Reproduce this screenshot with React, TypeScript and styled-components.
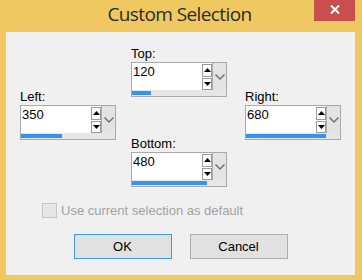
import React from 'react';
import styled, { createGlobalStyle } from 'styled-components';

const GlobalStyle = createGlobalStyle`
  html, body {
    margin: 0;
    padding: 0;
    background: #ffffff;
  }
  * {
    box-sizing: border-box;
  }
`;

type Field = { label: string; value: number; max: number };

const fields: Record<string, Field> = {
  top: { label: 'Top:', value: 120, max: 600 },
  left: { label: 'Left:', value: 350, max: 800 },
  right: { label: 'Right:', value: 680, max: 800 },
  bottom: { label: 'Bottom:', value: 480, max: 600 },
};

function SpinField({ field }: { field: Field }) {
  const pct = Math.min(100, (field.value / field.max) * 100);

  return (
    <FieldGroup>
      <FieldLabel>{field.label}</FieldLabel>
      <SpinBox>
        <SpinRow>
          <ValueInput readOnly value={String(field.value)} />
          <Spinner>
            <SpinButton>
              <svg width="7" height="4" viewBox="0 0 7 4">
                <polygon points="3.5,0 7,4 0,4" fill="#000" />
              </svg>
            </SpinButton>
            <SpinButton>
              <svg width="7" height="4" viewBox="0 0 7 4">
                <polygon points="0,0 7,0 3.5,4" fill="#000" />
              </svg>
            </SpinButton>
          </Spinner>
          <DropButton>
            <svg width="10" height="6" viewBox="0 0 10 6">
              <polyline points="0.5,0.5 5,5 9.5,0.5" fill="none" stroke="#6e6e6e" strokeWidth="1.4" />
            </svg>
          </DropButton>
        </SpinRow>
        <Track>
          <TrackFill style={{ width: `${pct}%` }} />
        </Track>
      </SpinBox>
    </FieldGroup>
  );
}

export default function App() {
  return (
    <>
      <GlobalStyle />
      <Window>
        <TitleBar>
          <span />
          <Title>Custom Selection</Title>
          <CloseButton>
            <svg width="10" height="9" viewBox="0 0 10 9">
              <path d="M1 0.5 L9 8.5 M9 0.5 L1 8.5" stroke="#fff" strokeWidth="2" />
            </svg>
          </CloseButton>
        </TitleBar>

        <Client>
          <FieldsArea>
            <SideColumn>
              <SpinField field={fields.left} />
            </SideColumn>
            <CenterColumn>
              <SpinField field={fields.top} />
              <SpinField field={fields.bottom} />
            </CenterColumn>
            <SideColumn $gap={18}>
              <SpinField field={fields.right} />
            </SideColumn>
          </FieldsArea>

          <CheckRow>
            <CheckBox />
            <CheckLabel>Use current selection as default</CheckLabel>
          </CheckRow>

          <ButtonRow>
            <DialogButton $isDefault>OK</DialogButton>
            <DialogButton>Cancel</DialogButton>
          </ButtonRow>
        </Client>
      </Window>
    </>
  );
}

const Window = styled.div`
  width: 362px;
  height: 280px;
  background: #f0c862;
  display: flex;
  flex-direction: column;
  font-family: 'Liberation Sans', Arial, sans-serif;
  font-size: 13px;
  color: #000;
`;

const TitleBar = styled.div`
  height: 32px;
  flex: none;
  display: grid;
  grid-template-columns: 1fr auto 1fr;
  padding: 0 7px 0 4px;
`;

const Title = styled.div`
  font-family: 'Open Sans', 'Noto Sans', sans-serif;
  font-size: 19px;
  letter-spacing: -0.6px;
  line-height: 28px;
  color: #2b2b2b;
  white-space: nowrap;
`;

const CloseButton = styled.div`
  justify-self: end;
  width: 41px;
  height: 21px;
  background: #c7504f;
  display: flex;
  align-items: center;
  justify-content: center;
  padding-bottom: 3px;
`;

const Client = styled.div`
  flex: 1;
  margin: 0 7px 5px 6px;
  background: #f0f0f0;
  padding-top: 14px;
`;

const FieldsArea = styled.div`
  display: flex;
  align-items: flex-start;
  padding-left: 14px;
`;

const SideColumn = styled.div<{ $gap?: number }>`
  margin-top: 43px;
  margin-left: ${(p) => p.$gap ?? 0}px;
`;

const CenterColumn = styled.div`
  display: flex;
  flex-direction: column;
  gap: 39px;
  margin-left: 15px;
`;

const FieldGroup = styled.div`
  width: 96px;
`;

const FieldLabel = styled.div`
  height: 15px;
  line-height: 15px;
  margin-bottom: 1px;
  color: #000;
`;

const SpinBox = styled.div`
  height: 35px;
  border: 1px solid #a9a9a9;
  background: #fff;
  display: flex;
  flex-direction: column;
`;

const SpinRow = styled.div`
  height: 27px;
  display: flex;
`;

const ValueInput = styled.input`
  flex: 1;
  min-width: 0;
  height: 100%;
  border: none;
  outline: none;
  background: #fff;
  padding: 0 1px 10px;
  font-family: 'Liberation Sans', Arial, sans-serif;
  font-size: 13px;
  color: #000;
`;

const Spinner = styled.div`
  width: 10px;
  display: flex;
  flex-direction: column;
  gap: 1px;
  padding: 1px 0 0;
`;

const SpinButton = styled.div`
  flex: 1;
  border: 1px solid #9a9a9a;
  background: #fdfdfd;
  display: flex;
  align-items: center;
  justify-content: center;
`;

const DropButton = styled.div`
  width: 14px;
  background: #e3e3e3;
  border-left: 1px solid #acacac;
  display: flex;
  align-items: center;
  justify-content: center;
`;

const Track = styled.div`
  flex: 1;
  background: #e6e6e6;
  padding-top: 1px;
`;

const TrackFill = styled.div`
  height: 4px;
  background: #3393ee;
`;

const CheckRow = styled.div`
  display: flex;
  align-items: center;
  margin-top: 16px;
  padding-left: 36px;
`;

const CheckBox = styled.div`
  width: 15px;
  height: 15px;
  border: 1px solid #c6c6c6;
  background: #e6e6e6;
`;

const CheckLabel = styled.span`
  margin-left: 4px;
  line-height: 15px;
  color: #a2a2a2;
`;

const ButtonRow = styled.div`
  display: flex;
  justify-content: center;
  gap: 18px;
  margin-top: 16px;
`;

const DialogButton = styled.div<{ $isDefault?: boolean }>`
  width: 98px;
  height: 25px;
  display: flex;
  align-items: center;
  justify-content: center;
  background: #e1e1e1;
  border: 1px solid ${(p) => (p.$isDefault ? '#3c9be8' : '#adadad')};
  color: #000;
`;
